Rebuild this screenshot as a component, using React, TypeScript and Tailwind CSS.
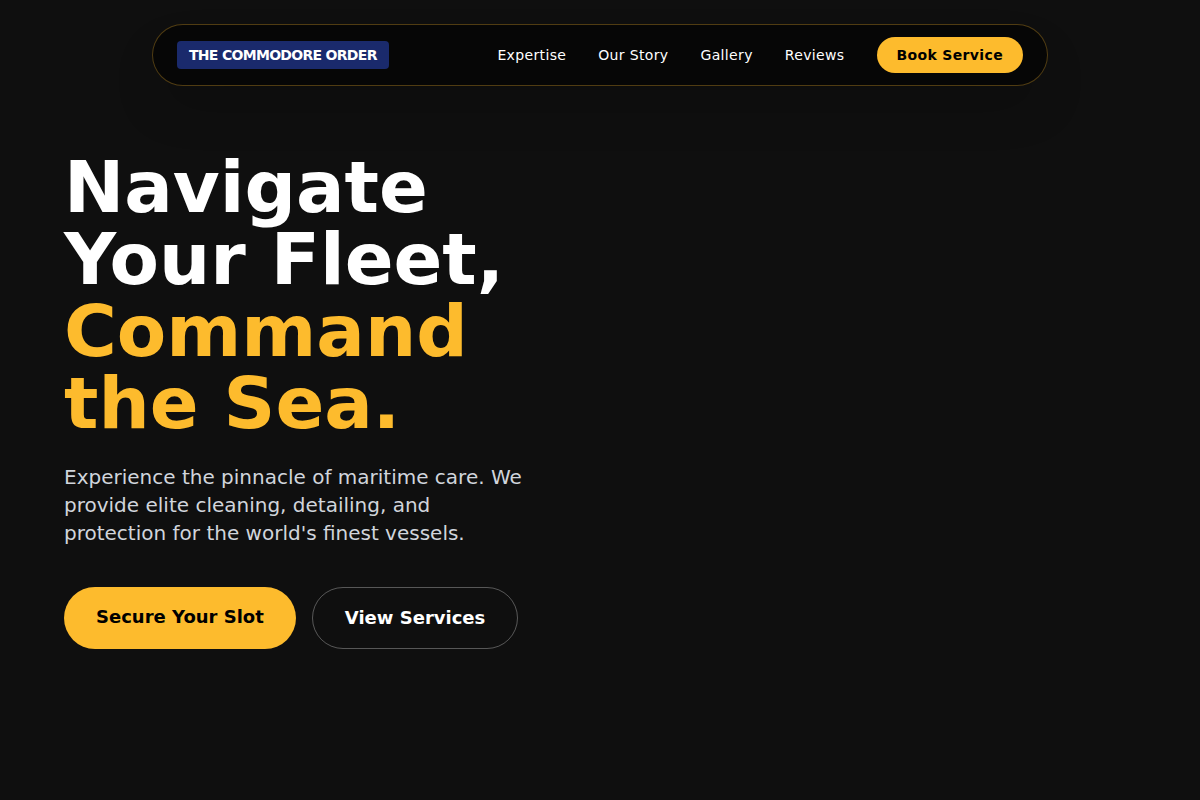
const navLinks = [
    { label: "Expertise", href: "#expertise" },
    { label: "Our Story", href: "#story" },
    { label: "Gallery", href: "#gallery" },
    { label: "Reviews", href: "#reviews" },
];

function Navbar() {
    return (
        <header className="z-10 col-start-1 row-start-1 self-start px-6 pt-6">
            <nav className="mx-auto flex max-w-4xl items-center justify-between rounded-full border border-[#fdbb2d]/30 bg-black/60 px-6 py-3 shadow-2xl">
                <a
                    href="#top"
                    className="rounded bg-[#1a2a6c] px-3 py-1 text-sm font-bold uppercase tracking-tighter text-white"
                >
                    The Commodore Order
                </a>
                <div className="flex items-center gap-8 text-sm tracking-wide text-white">
                    {navLinks.map(link => (
                        <a key={link.href} href={link.href} className="transition hover:text-[#fdbb2d]">
                            {link.label}
                        </a>
                    ))}
                    <button
                        type="button"
                        className="rounded-full bg-[#fdbb2d] px-5 py-2 font-bold tracking-wide text-black transition hover:bg-white"
                    >
                        Book Service
                    </button>
                </div>
            </nav>
        </header>
    );
}

function Hero() {
    return (
        <section className="col-start-1 row-start-1 grid grid-cols-2 items-center">
            <div className="px-16">
                <h1 className="text-7xl leading-none font-bold text-white">
                    Navigate Your Fleet, <span className="text-[#fdbb2d]">Command the Sea.</span>
                </h1>
                <p className="mt-6 text-xl text-gray-300">
                    Experience the pinnacle of maritime care. We provide elite cleaning, detailing, and
                    protection for the world's finest vessels.
                </p>
                <div className="mt-10 flex gap-4 text-lg font-bold whitespace-nowrap">
                    <button
                        type="button"
                        className="flex items-start rounded-full bg-[#fdbb2d] px-8 py-4 text-black transition hover:bg-white"
                    >
                        Secure Your Slot
                    </button>
                    <button
                        type="button"
                        className="flex items-start rounded-full border border-white/30 px-8 py-4 text-white transition hover:bg-white/10"
                    >
                        View Services
                    </button>
                </div>
            </div>
        </section>
    );
}

export default function App() {
    return (
        <main id="top" className="grid min-h-screen bg-[#0f0f0f] font-['DejaVu_Sans',sans-serif]">
            <Navbar />
            <Hero />
        </main>
    );
}
